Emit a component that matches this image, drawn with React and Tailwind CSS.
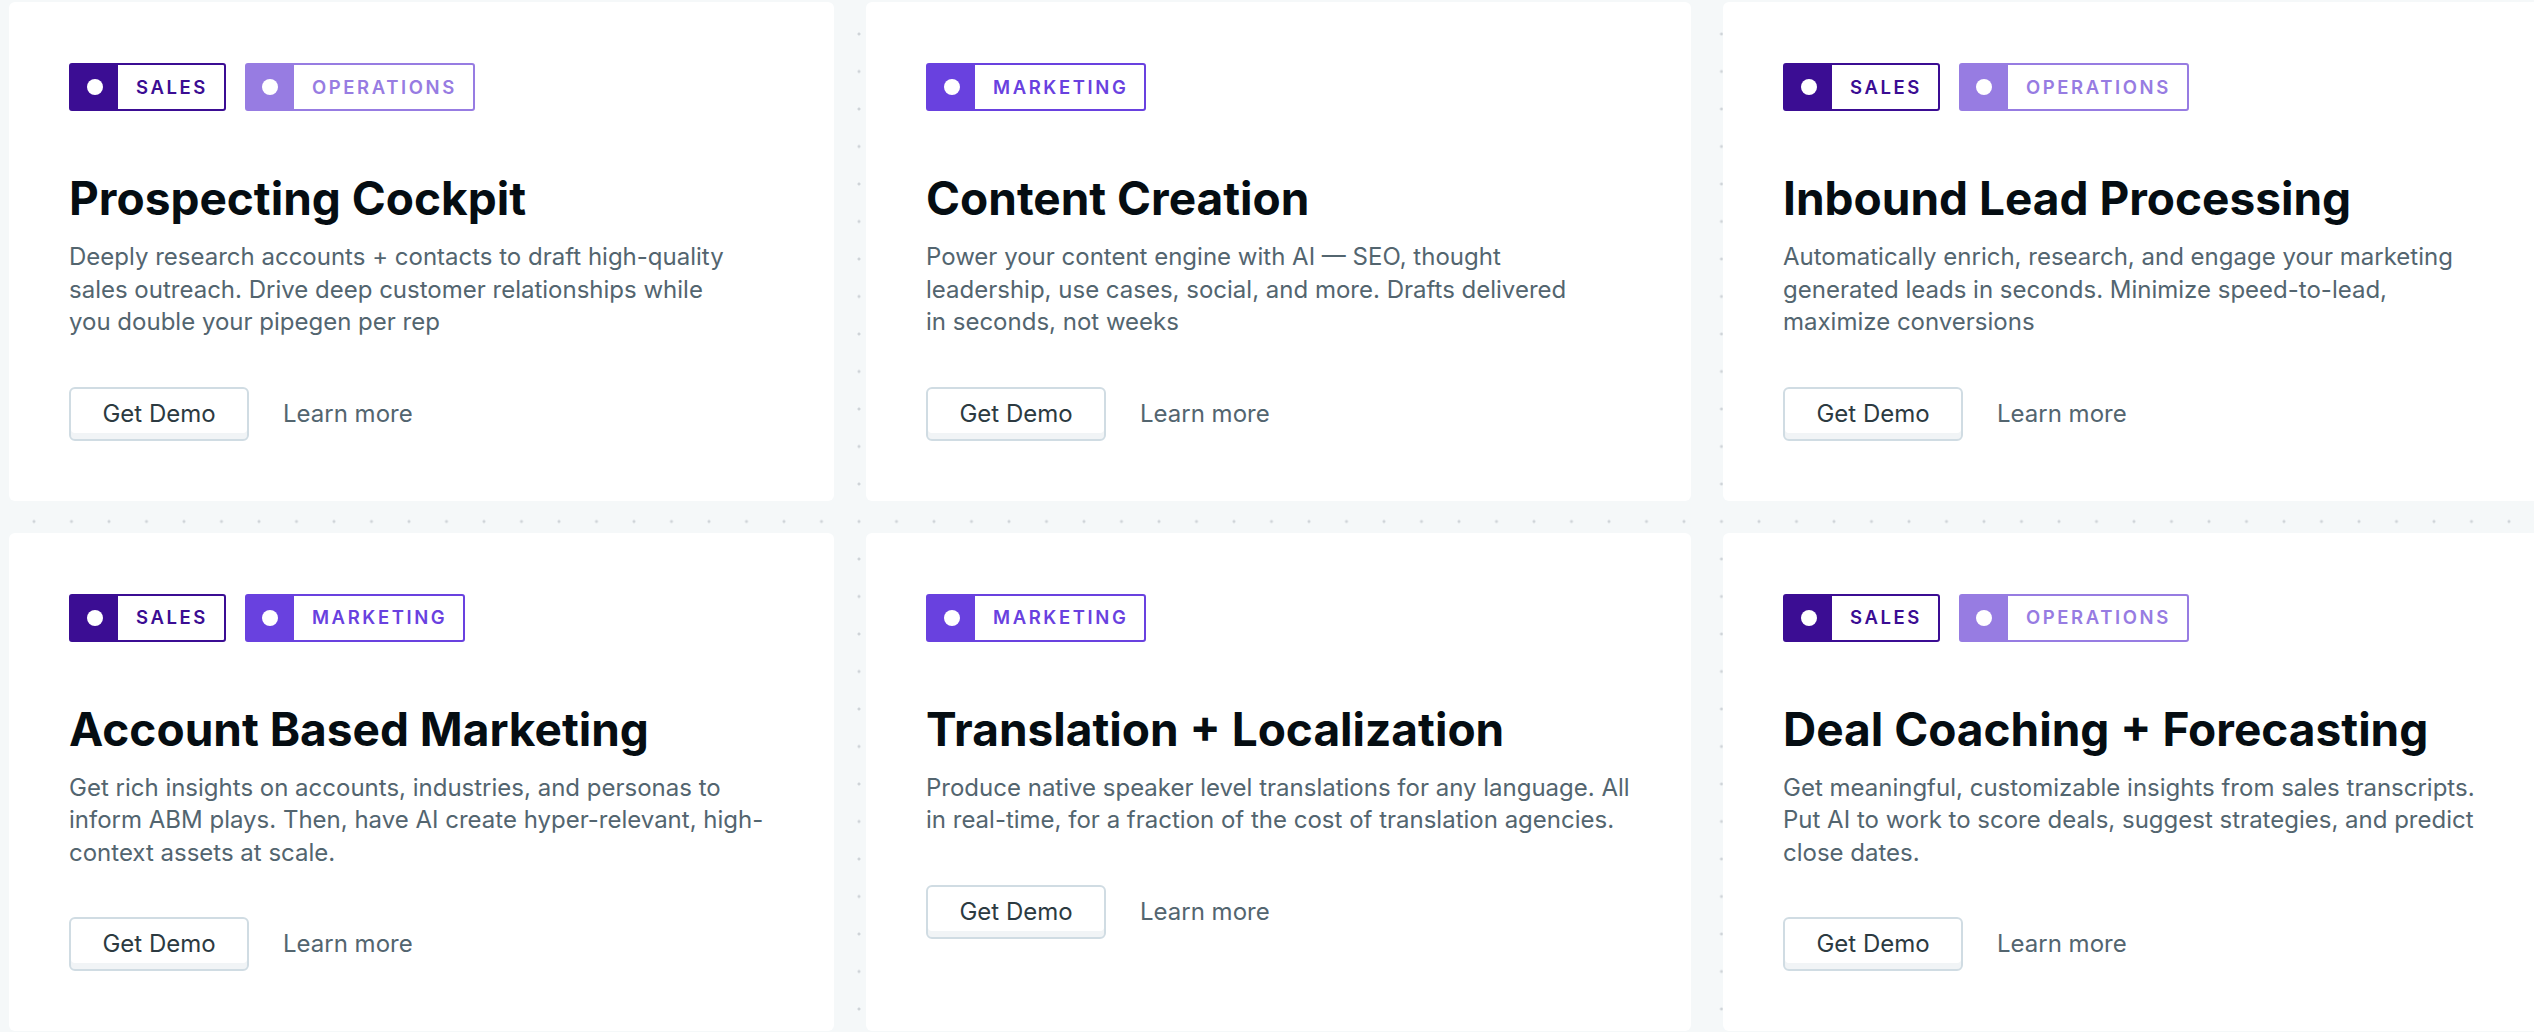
const TAGS = {
  SALES: {
    box: 'border-[#3b0d93]',
    square: 'bg-[#3b0d93]',
    text: 'text-[#3b0d93]',
  },
  MARKETING: {
    box: 'border-[#6941df]',
    square: 'bg-[#6941df]',
    text: 'text-[#6941df]',
  },
  OPERATIONS: {
    box: 'border-[#977ce2]',
    square: 'bg-[#977ce2]',
    text: 'text-[#977ce2]',
  },
};

const USE_CASES = [
  {
    title: 'Prospecting Cockpit',
    tags: ['SALES', 'OPERATIONS'],
    lines: [
      'Deeply research accounts + contacts to draft high-quality',
      'sales outreach. Drive deep customer relationships while',
      'you double your pipegen per rep',
    ],
  },
  {
    title: 'Content Creation',
    tags: ['MARKETING'],
    lines: [
      'Power your content engine with AI — SEO, thought',
      'leadership, use cases, social, and more. Drafts delivered',
      'in seconds, not weeks',
    ],
  },
  {
    title: 'Inbound Lead Processing',
    tags: ['SALES', 'OPERATIONS'],
    lines: [
      'Automatically enrich, research, and engage your marketing',
      'generated leads in seconds. Minimize speed-to-lead,',
      'maximize conversions',
    ],
  },
  {
    title: 'Account Based Marketing',
    tags: ['SALES', 'MARKETING'],
    lines: [
      'Get rich insights on accounts, industries, and personas to',
      'inform ABM plays. Then, have AI create hyper-relevant, high-',
      'context assets at scale.',
    ],
  },
  {
    title: 'Translation + Localization',
    tags: ['MARKETING'],
    lines: [
      'Produce native speaker level translations for any language. All',
      'in real-time, for a fraction of the cost of translation agencies.',
    ],
  },
  {
    title: 'Deal Coaching + Forecasting',
    tags: ['SALES', 'OPERATIONS'],
    lines: [
      'Get meaningful, customizable insights from sales transcripts.',
      'Put AI to work to score deals, suggest strategies, and predict',
      'close dates.',
    ],
  },
];

function Tag({ name }) {
  const t = TAGS[name];
  return (
    <div className={`flex h-12 items-stretch rounded-[3px] border-2 bg-white ${t.box}`}>
      <div className={`flex w-[47px] items-center justify-center ${t.square}`}>
        <span className="h-4 w-4 rounded-full bg-white" />
      </div>
      <span className={`flex items-center pt-px pl-[18px] pr-[16px] text-[18.5px] font-semibold tracking-[0.14em] ${t.text}`}>
        {name}
      </span>
    </div>
  );
}

function UseCaseCard({ item }) {
  return (
    <div className="flex flex-col rounded-md bg-white px-[60px] pt-[61px] pb-[60px]">
      {/* tags */}
      <div className="flex gap-[19px]">
        {item.tags.map((tag) => (
          <Tag key={tag} name={tag} />
        ))}
      </div>

      <h2 className="mt-[60px] text-[46px] leading-[54px] font-bold text-[#050d12]">
        {item.title}
      </h2>

      <p className="mt-4 w-[740px] text-[24px] leading-[32.5px] text-[#53656f]">
        {item.lines.map((line, i) => (
          <span key={i} className="block whitespace-nowrap">
            {line}
          </span>
        ))}
      </p>

      <div className="mt-12 flex items-center gap-[34px]">
        <button className="h-[54px] w-[180px] rounded-md border-2 border-[#d0dce3] bg-white text-[24px] text-[#2c3a41] shadow-[inset_0_-6px_0_#f1f4f6]">
          Get Demo
        </button>
        <a className="text-[24px] text-[#53656f]">Learn more</a>
      </div>
    </div>
  );
}

export default function App() {
  return (
    <div className="h-screen w-full overflow-hidden bg-[#f5f8f9] bg-[radial-gradient(circle,#cfd4d8_1.5px,transparent_1.6px)] bg-[size:37.5px_37.5px] bg-[position:15.25px_15.25px] font-['Inter',sans-serif]">
      <div className="grid grid-cols-[repeat(3,825px)] gap-8 pt-[2px] pl-[9px]">
        {USE_CASES.map((item) => (
          <UseCaseCard key={item.title} item={item} />
        ))}
      </div>
    </div>
  );
}
